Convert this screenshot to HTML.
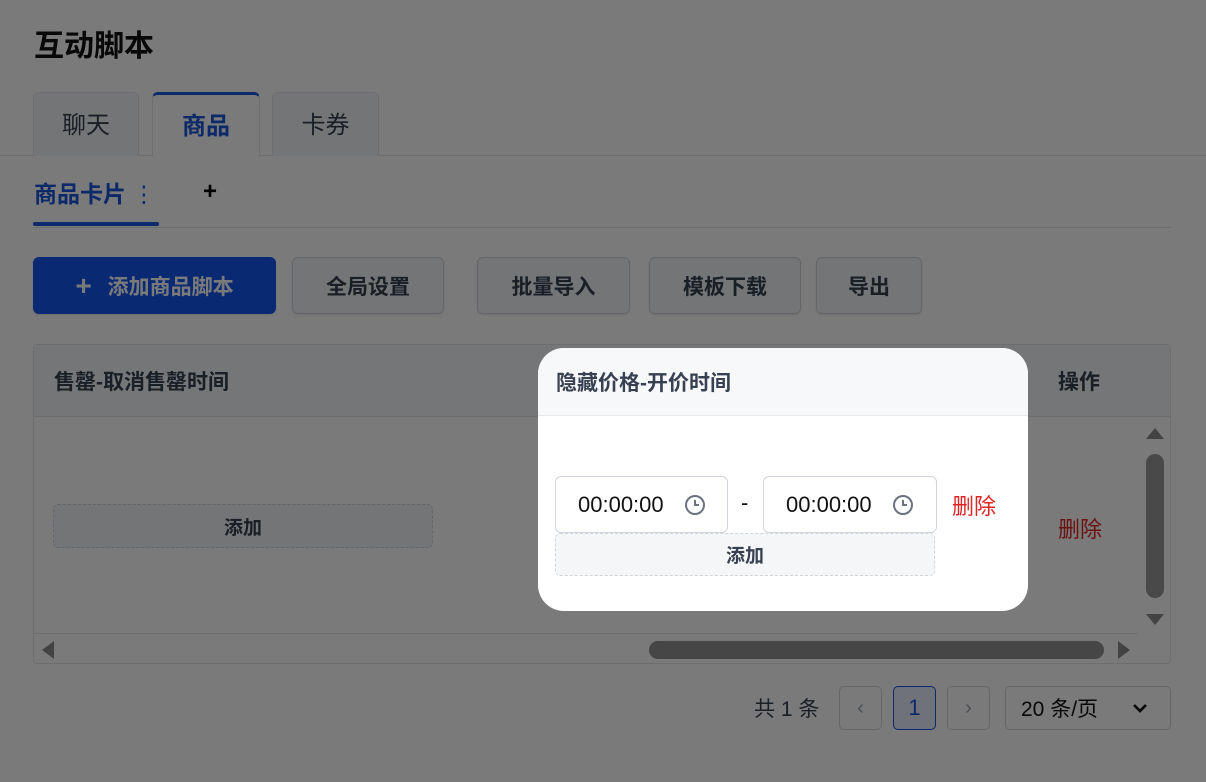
<!DOCTYPE html>
<html><head><meta charset="utf-8"><style>
*{box-sizing:border-box;margin:0;padding:0}
body{width:1206px;height:782px;overflow:hidden;background:#fff;font-family:"Liberation Sans","Noto Sans CJK SC",sans-serif;position:relative;color:#1f2937}
.a{position:absolute}
.tab{position:absolute;top:92px;height:64px;background:#f3f4f6;border:1px solid #e5e7eb;border-bottom:none;border-radius:6px 6px 0 0;font-size:24px;color:#374151;display:flex;align-items:center;justify-content:center;padding-bottom:4px}
.btn{position:absolute;top:257px;height:57px;background:#f3f4f6;border:1px solid #d1d5db;border-radius:6px;font-size:21px;font-weight:bold;color:#374151;display:flex;align-items:center;justify-content:center;box-shadow:0 1px 2px rgba(0,0,0,.1)}
.dash{position:absolute;border:1px dashed #d1d5db;background:#f3f4f6;border-radius:5px;font-size:19px;font-weight:bold;color:#374151;display:flex;align-items:center;justify-content:center}
.inp{position:absolute;top:476px;height:57px;border:1px solid #d1d5db;border-radius:6px;background:#fff;font-size:22px;color:#111;display:flex;align-items:center;padding-left:22px}
.pg{position:absolute;top:686px;height:44px;border:1px solid #d1d5db;border-radius:5px;background:#fff;display:flex;align-items:center;justify-content:center;color:#9ca3af;font-size:20px}
</style></head><body>
<div class="a" style="left:34px;top:21px;font-size:30px;font-weight:bold;color:#111">互动脚本</div>
<div class="a" style="left:0;top:155px;width:1206px;height:1px;background:#e5e7eb"></div>
<div class="tab" style="left:33px;width:106px">聊天</div>
<div class="tab" style="left:152px;width:108px;background:#fff;border-top:3px solid #1a56db;height:65px;color:#1a56db;font-weight:bold;padding-bottom:6px">商品</div>
<div class="tab" style="left:272px;width:107px">卡券</div>
<div class="a" style="left:34px;top:175px;font-size:23px;font-weight:bold;color:#1a56db">商品卡片 <span style="font-weight:normal">⋮</span></div>
<div class="a" style="left:203px;top:178px;font-size:24px;font-weight:bold;color:#000">+</div>
<div class="a" style="left:33px;top:227px;width:1138px;height:1px;background:#e5e7eb"></div>
<div class="a" style="left:33px;top:222px;width:126px;height:4px;background:#1a56db;border-radius:2px"></div>
<div class="btn" style="left:33px;width:243px;background:#1458f0;border-color:#1458f0;color:#fff"><span style="font-size:28px;margin-right:16px">+</span>添加商品脚本</div>
<div class="btn" style="left:292px;width:152px">全局设置</div>
<div class="btn" style="left:477px;width:153px">批量导入</div>
<div class="btn" style="left:649px;width:152px">模板下载</div>
<div class="btn" style="left:816px;width:106px">导出</div>
<div class="a" style="left:33px;top:344px;width:1138px;height:320px;border:1px solid #e5e7eb;border-radius:4px"></div>
<div class="a" style="left:34px;top:345px;width:1136px;height:72px;background:#f5f6f8;border-bottom:1px solid #e5e7eb"></div>
<div class="a" style="left:54px;top:366px;font-size:21px;font-weight:bold;color:#374151">售罄-取消售罄时间</div>
<div class="a" style="left:1058px;top:366px;font-size:21px;font-weight:bold;color:#374151">操作</div>
<div class="dash" style="left:53px;top:504px;width:380px;height:44px">添加</div>
<div class="a" style="left:1058px;top:512px;font-size:22px;color:#e02424">删除</div>
<div class="a" style="left:34px;top:633px;width:1104px;height:1px;background:#e5e7eb"></div>
<div class="a" style="left:1146px;top:454px;width:18px;height:144px;background:#9a9a9a;border-radius:9px"></div>
<div class="a" style="left:1146px;top:428px;width:0;height:0;border-left:9px solid transparent;border-right:9px solid transparent;border-bottom:11px solid #8c8c8c"></div>
<div class="a" style="left:1146px;top:614px;width:0;height:0;border-left:9px solid transparent;border-right:9px solid transparent;border-top:11px solid #8c8c8c"></div>
<div class="a" style="left:649px;top:641px;width:455px;height:18px;background:#929292;border-radius:9px"></div>
<div class="a" style="left:42px;top:641px;width:0;height:0;border-top:9px solid transparent;border-bottom:9px solid transparent;border-right:12px solid #8c8c8c"></div>
<div class="a" style="left:1118px;top:641px;width:0;height:0;border-top:9px solid transparent;border-bottom:9px solid transparent;border-left:12px solid #8c8c8c"></div>
<div class="a" style="left:754px;top:693px;font-size:21px;color:#374151">共 1 条</div>
<div class="pg" style="left:839px;width:43px">‹</div>
<div class="pg" style="left:893px;width:43px;border-color:#1a56db;background:#e8effd;color:#1a56db;font-size:22px">1</div>
<div class="pg" style="left:947px;width:43px">›</div>
<div class="pg" style="left:1005px;width:166px;color:#111;font-size:21px;justify-content:flex-start;padding-left:15px">20 条/页<svg class="a" style="left:126px;top:15px" width="16" height="12" viewBox="0 0 16 12"><path d="M2 3l6 6 6-6" fill="none" stroke="#111" stroke-width="2.6"/></svg></div>
<!-- spotlight -->
<div class="a" style="left:538px;top:348px;width:490px;height:263px;border-radius:26px;box-shadow:0 0 0 3000px rgba(0,0,0,.52);overflow:hidden;background:#fff">
<div class="a" style="left:0;top:0;width:490px;height:68px;background:#f7f8fa;border-bottom:1px solid #e8eaee"></div>
<div class="a" style="left:18px;top:19px;font-size:21px;font-weight:bold;color:#374151">隐藏价格-开价时间</div>
</div>
<div class="inp" style="left:555px;width:173px">00:00:00<svg class="a" style="left:128px;top:17px" width="22" height="22" viewBox="0 0 22 22"><circle cx="11" cy="11" r="9" fill="none" stroke="#6b7280" stroke-width="2"/><path d="M11 6v5h4" fill="none" stroke="#6b7280" stroke-width="2"/></svg></div>
<div class="a" style="left:741px;top:490px;font-size:22px;color:#111">-</div>
<div class="inp" style="left:763px;width:174px">00:00:00<svg class="a" style="left:128px;top:17px" width="22" height="22" viewBox="0 0 22 22"><circle cx="11" cy="11" r="9" fill="none" stroke="#6b7280" stroke-width="2"/><path d="M11 6v5h4" fill="none" stroke="#6b7280" stroke-width="2"/></svg></div>
<div class="a" style="left:952px;top:489px;font-size:22px;color:#e02424">删除</div>
<div class="dash" style="left:555px;top:533px;width:380px;height:43px;background:#f5f6f8">添加</div>
</body></html>
